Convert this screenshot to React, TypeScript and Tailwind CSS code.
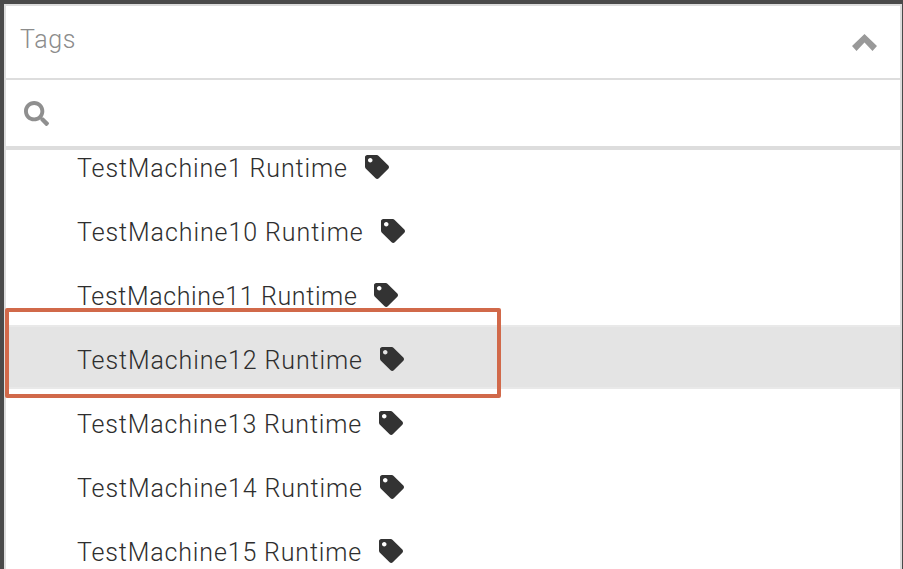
import { FaTag, FaSearch } from "react-icons/fa";

const rows = [
  { name: "TestMachine1 Runtime", tracking: "tracking-[0.87px]" },
  { name: "TestMachine10 Runtime", tracking: "tracking-[0.92px]" },
  { name: "TestMachine11 Runtime", tracking: "tracking-[0.63px]" },
  { name: "TestMachine12 Runtime", tracking: "tracking-[0.89px]" },
  { name: "TestMachine13 Runtime", tracking: "tracking-[0.85px]" },
  { name: "TestMachine14 Runtime", tracking: "tracking-[0.89px]" },
  { name: "TestMachine15 Runtime", tracking: "tracking-[0.85px]" },
];

export default function App() {
  return (
    <div className="relative w-[903px] h-[569px] overflow-hidden bg-[#4a4a4a] pt-1 pl-1 pr-px font-['Roboto',sans-serif]">
      <div className="flex h-full flex-col border-2 border-b-0 border-[#dddddd] bg-white">
        <div className="flex h-[72px] shrink-0 items-center justify-between border-b-2 border-[#dddddd] pl-[14px] pr-[23px] box-content">
          <span className="pb-1 text-[25px] font-light tracking-[0.6px] text-[#8c8c8c]">Tags</span>
          <svg width="25" height="17" viewBox="0 0 25 17" className="mt-px fill-[#999999]">
            <polygon points="12.5,0 25,12 20.5,17 12.5,8.5 4.5,17 0,12" />
          </svg>
        </div>
        <div className="flex h-[66px] shrink-0 items-center border-b-4 border-[#dddddd] pl-[18px] box-content">
          <FaSearch className="text-[25px] text-[#8f8f8f]" />
        </div>
        <div className="min-h-0 flex-1 overflow-hidden">
          <div className="-mt-[17px]">
            {rows.map((r) => (
              <div key={r.name} className={`flex h-16 items-center gap-[17px] pl-[71px] pt-2 text-[25px] font-light text-[#2e2e2e] ${r.tracking} ${r.name.includes("12") ? "border-y-2 border-[#e9e9e9] bg-[#e4e4e4]" : ""}`}>
                <span>{r.name}</span>
                <FaTag className="-mt-1 text-[24px] text-[#333333]" />
              </div>
            ))}
          </div>
        </div>
      </div>
      <div className="absolute left-[5px] top-[308px] h-[90px] w-[496px] rounded-[2px] border-4 border-[#d1694a]" />
    </div>
  );
}
